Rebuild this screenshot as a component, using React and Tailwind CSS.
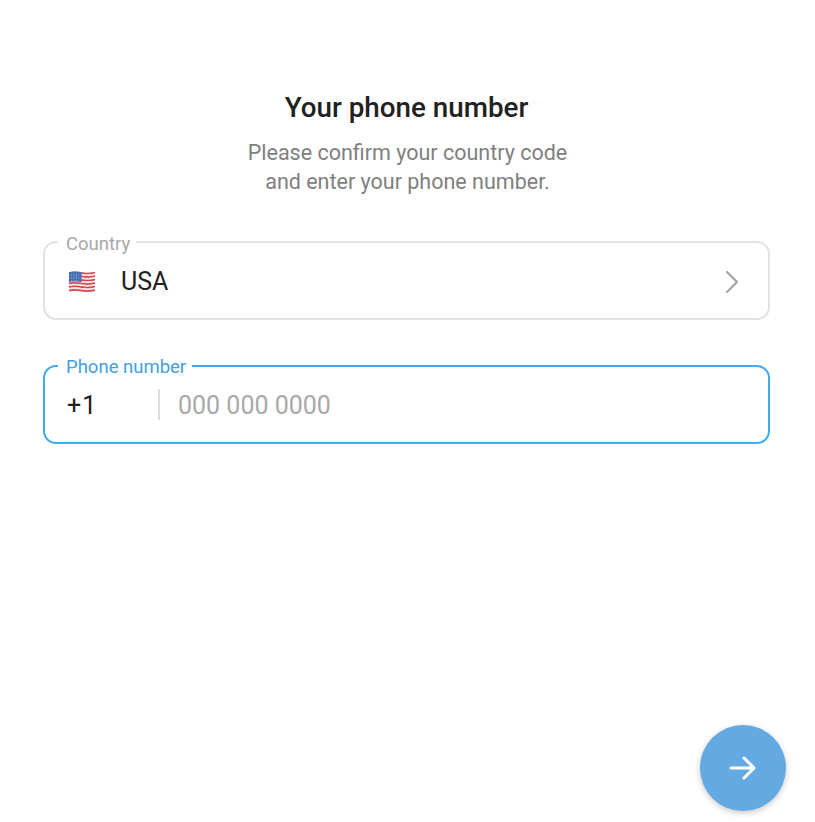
export default function App() {
  const font = { fontFamily: "Roboto, sans-serif" };

  // Waving stripes of the flag
  const stripes = [];
  for (let i = 0; i < 11; i++) {
    const y = 3.2 + i * 1.75;
    stripes.push(
      <path
        key={i}
        d={`M1 ${y}c5-1.6 8-.8 13 0s8 .6 13-.6`}
        stroke={i % 2 === 0 ? "#d5454f" : "#f3e4e4"}
        strokeWidth="1.75"
        fill="none"
      />
    );
  }

  return (
    <div style={font} className="h-[822px] w-[815px] bg-white flex flex-col overflow-hidden font-['Roboto',sans-serif]">
      <div className="pt-[91px] text-center">
        <h1 className="pr-[2px] text-[27.8px] leading-[34px] font-medium text-[#212121]">Your phone number</h1>
        <p className="mt-[13px] text-[21.5px] leading-[29px] text-[#808080]">
          Please confirm your country code
          <br />
          and enter your phone number.
        </p>
      </div>

      <div className="mt-[45px] mx-[43px] w-[727px] h-[79px] relative border-2 border-[#e2e2e2] rounded-[13px] flex items-center pt-[3px] pl-[23px] pr-[29px]">
        <span className="absolute left-[13px] -top-[9px] bg-white pl-2 pr-[6px] text-[18.5px] leading-[20px] text-[#a8a8a8]">Country</span>
        <svg width="28" height="24" viewBox="0 0 28 24" className="shrink-0">
          {stripes}
          <path d="M1 2.200c3.500-1.100 8-.9 12.500-.1v10c-4.500-.8-9-.9-12.500.2z" fill="#4470b4" />
          <path d="M3 5h8M3 8h8M3 11h8" stroke="#a9c0e2" strokeWidth="1" strokeDasharray="1 1.500" fill="none" />
        </svg>
        <span className="ml-[25px] text-[25px] leading-[30px] text-[#212121]">USA</span>
        <svg width="14" height="24" viewBox="0 0 14 24" className="ml-auto shrink-0" fill="none" stroke="#a8a8a8" strokeWidth="2.4" strokeLinecap="round" strokeLinejoin="round">
          <path d="M2 2l10 10-10 10" />
        </svg>
      </div>

      <div className="mt-[45px] mx-[43px] w-[727px] h-[79px] relative border-2 border-[#3eaaf0] rounded-[13px] flex items-center pl-[22px]">
        <span className="absolute left-[13px] -top-[10px] bg-white pl-2 pr-[6px] text-[18.5px] leading-[20px] text-[#3f9fe0]">Phone number</span>
        <span className="w-[91px] pt-[2px] text-[25px] leading-[30px] tracking-[1px] text-[#212121]">+1</span>
        <div className="w-[2px] h-[31px] bg-[#dcdcdc]"></div>
        <span className="ml-[18px] pt-[2px] text-[25px] leading-[30px] text-[#a8a8a8]">000 000 0000</span>
      </div>

      <button className="mt-auto mb-[11px] mr-[29px] self-end w-[86px] h-[86px] rounded-full bg-[#65a9e3] shadow-[0_2px_6px_rgba(0,0,0,0.22)] flex items-center justify-center">
        <svg width="28" height="24" viewBox="0 0 28 24" fill="none" stroke="#ffffff" strokeWidth="3" strokeLinecap="round" strokeLinejoin="round">
          <path d="M2 12h23M15 2l10 10-10 10" />
        </svg>
      </button>
    </div>
  );
}
